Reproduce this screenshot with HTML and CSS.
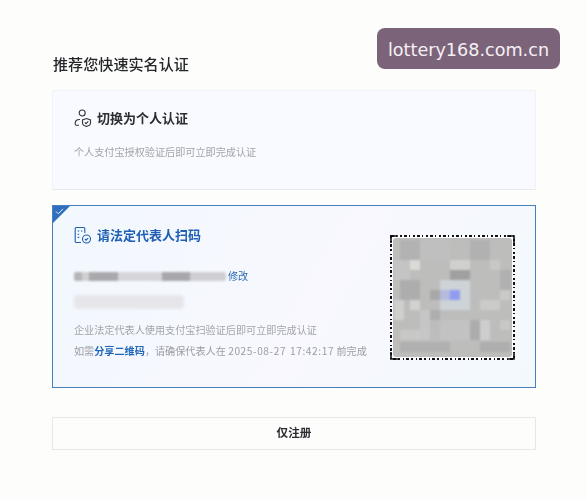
FILE: index.html
```html
<!DOCTYPE html>
<html lang="zh-CN">
<head>
<meta charset="utf-8">
<title>实名认证</title>
<link rel="stylesheet" href="styles.css">
</head>
<body>
<div class="watermark">lottery168.com.cn</div>
<main class="page">
  <h1 class="heading">推荐您快速实名认证</h1>

  <section class="card card-plain">
    <div class="title-row">
      <svg class="icon" viewBox="0 0 18 18" fill="none" stroke="#33363c" stroke-width="1.1">
        <circle cx="8.2" cy="4" r="3"/>
        <path d="M6 10.5H5.2C2.8 10.5 1.2 12 1.2 14.2V15c0 .8.5 1.2 1.2 1.2H5"/>
        <path d="M12.5 9.6l4 1.3v3c0 1.8-1.7 2.9-4 3.5-2.3-.6-4-1.7-4-3.5v-3z"/>
        <path d="M10.8 13.3l1.3 1.3 2.2-2.2"/>
      </svg>
      <h2 class="title">切换为个人认证</h2>
    </div>
    <p class="desc desc-top">个人支付宝授权验证后即可立即完成认证</p>
  </section>

  <section class="card card-active">
    <span class="corner"></span>
    <svg class="corner-check" viewBox="0 0 10 8" fill="none" stroke="#fff" stroke-width="1"><path d="M1 4l2.6 2.6L9 1"/></svg>
    <div class="active-info">
      <div class="title-row">
        <svg class="icon" viewBox="0 0 18 18" fill="none" stroke="#1f5fae" stroke-width="1.1">
          <path d="M7 16.5H2.2c-.6 0-1-.4-1-1V2.5c0-.6.4-1 1-1h7.6c.6 0 1 .4 1 1V7"/>
          <path d="M3.6 5h1.6M3.6 8.2h1.6M7 5h1.4M3.6 11.4h1.6"/>
          <circle cx="12.5" cy="13" r="4"/>
          <path d="M10.9 13l1.2 1.2 2-2"/>
        </svg>
        <h2 class="title title-blue">请法定代表人扫码</h2>
      </div>
      <div class="name-row">
        <div class="blur-name"></div>
        <a class="link edit">修改</a>
      </div>
      <div class="blur-id"></div>
      <p class="desc desc-company">企业法定代表人使用支付宝扫验证后即可立即完成认证</p>
      <p class="desc desc-share">如需<a class="link strong">分享二维码</a>，请确保代表人在 <span class="date">2025-08-27 17:42:17</span> 前完成</p>
    </div>
    <svg class="qr" viewBox="0 0 125 125">
      <rect x="1" y="1" width="123" height="123" fill="#fff"/>
      <rect x="1" y="1" width="123" height="123" fill="none" stroke="#111" stroke-width="2" stroke-dasharray="3 2 1 3 2 2"/>
      <path d="M1 8V1h7M117 1h7v7M1 117v7h7M124 117v7h-7" fill="none" stroke="#111" stroke-width="1.6"/>
      <rect x="3" y="3" width="119" height="119" rx="3" fill="#bdbdbc"/>
      <g class="qr-cells">
        <rect x="10" y="5" width="20" height="20" fill="#b2b2b2"/>
        <rect x="30" y="5" width="30" height="20" fill="#bfbfbf"/>
        <rect x="80" y="5" width="20" height="20" fill="#b1b1b1"/>
        <rect x="4" y="25" width="16" height="20" fill="#c4c4c4"/>
        <rect x="20" y="25" width="10" height="10" fill="#dadad7"/>
        <rect x="60" y="25" width="20" height="10" fill="#d0d0ce"/>
        <rect x="60" y="35" width="20" height="10" fill="#a0a0a0"/>
        <rect x="100" y="25" width="10" height="10" fill="#c8c8c6"/>
        <rect x="110" y="35" width="11" height="20" fill="#b0b0b0"/>
        <rect x="10" y="45" width="20" height="20" fill="#adadad"/>
        <rect x="50" y="45" width="30" height="30" fill="#cdd3d7"/>
        <rect x="40" y="55" width="10" height="10" fill="#a8a8a8"/>
        <rect x="50" y="55" width="10" height="10" fill="#b5bbde"/>
        <rect x="60" y="55" width="10" height="10" fill="#8f9cf0"/>
        <rect x="110" y="55" width="10" height="10" fill="#cacac8"/>
        <rect x="20" y="65" width="10" height="10" fill="#d2d2d0"/>
        <rect x="90" y="65" width="20" height="10" fill="#cbcbc9"/>
        <rect x="4" y="65" width="10" height="20" fill="#cfcfcd"/>
        <rect x="30" y="75" width="10" height="30" fill="#c6c6c6"/>
        <rect x="40" y="75" width="10" height="10" fill="#aeaeae"/>
        <rect x="80" y="85" width="10" height="20" fill="#acacac"/>
        <rect x="90" y="85" width="10" height="20" fill="#cecece"/>
        <rect x="110" y="85" width="10" height="10" fill="#c8c8c6"/>
        <rect x="10" y="95" width="20" height="10" fill="#c8c8c6"/>
        <rect x="50" y="85" width="30" height="20" fill="#c2c2c2"/>
        <rect x="10" y="107" width="50" height="10" fill="#b0b0b0"/>
        <rect x="90" y="107" width="30" height="10" fill="#aeaeae"/>
      </g>
    </svg>
  </section>

  <button class="register" type="button">仅注册</button>
</main>
</body>
</html>
```

FILE: styles.css
```css
* { box-sizing: border-box; }
html, body { margin: 0; height: 100%; }
body {
  background: #fdfefc;
  color: #222;
  font-family: "Noto Sans CJK SC", "Liberation Sans", sans-serif;
  position: relative;
  overflow: hidden;
}
.page {
  width: 484px;
  margin-left: 52px;
  padding-top: 53px;
  display: flex;
  flex-direction: column;
  filter: blur(.3px);
}
.heading {
  margin: 0 0 17px 1px;
  font-size: 15.1px;
  line-height: 20px;
  font-weight: 500;
  color: #25272b;
}
.card { width: 484px; position: relative; }
.card-plain {
  height: 100px;
  padding: 17px 21px 0;
  background: #f8faff;
  border: 1px solid #f2f3f6;
  border-bottom-color: #e9eaee;
  margin-bottom: 15px;
}
.card-active {
  height: 183px;
  padding: 19px 20px 0 21px;
  background: linear-gradient(120deg, #f1f8fe 0%, #f8f8fe 55%, #f2f9fd 100%);
  border: 1px solid #4580bd;
  display: flex;
  justify-content: space-between;
  margin-bottom: 29px;
}
.title-row { display: flex; align-items: center; gap: 5px; height: 20px; }
.icon { width: 18px; height: 18px; flex: none; }
.title { margin: 0; font-size: 13px; line-height: 20px; font-weight: 700; color: #2b2d31; }
.title-blue { color: #1f5fb4; }
.desc { margin: 0; font-size: 10.15px; line-height: 16px; color: #a3a5a9; }
.desc-top { margin-top: 16px; }
.desc-company { margin-top: 13px; }
.desc-share { margin-top: 5px; white-space: nowrap; color: #9b9da2; }
.date { letter-spacing: .6px; word-spacing: 1px; }
.link { color: #2d6db5; }
.strong { font-weight: 700; color: #1f66b8; }
.corner {
  position: absolute;
  left: 0;
  top: 0;
  border-style: solid;
  border-width: 17px 17px 0 0;
  border-color: #2f6fc0 transparent transparent transparent;
}
.corner-check { position: absolute; left: 2px; top: 2px; width: 9px; height: 7px; }
.active-info { width: 310px; }
.name-row { display: flex; align-items: center; gap: 2px; margin-top: 23px; height: 16px; }
.blur-name {
  width: 152px;
  height: 9px;
  border-radius: 2px;
  filter: blur(.8px);
  background: linear-gradient(90deg, #b5b5b8 0 5%, #d0d0d3 5% 10%, #a9a9ad 10% 29%, #d6d6da 29% 58%, #a8a8ac 58% 76%, #cfcfd3 76% 100%);
}
.edit { font-size: 10.15px; line-height: 16px; }
.blur-id {
  width: 110px;
  height: 14px;
  margin-top: 11px;
  border-radius: 4px;
  filter: blur(1.8px);
  background: #e6e6ea;
}
.qr { width: 125px; height: 125px; flex: none; margin: 10px 0 0; }
.qr-cells { filter: blur(1px); }
.register {
  width: 484px;
  height: 33px;
  padding: 0 0 2px;
  background: #fdfdfc;
  border: 1px solid #e6e7ea;
  font: 700 11.6px/1 "Noto Sans CJK SC", sans-serif;
  color: #2a2c30;
}
.watermark {
  position: absolute;
  left: 377px;
  top: 28px;
  width: 183px;
  height: 41px;
  border-radius: 8px;
  background: #7b6479;
  color: #f6f0f5;
  font: 17.6px/44px "DejaVu Sans", sans-serif;
  text-align: center;
  white-space: nowrap;
}
```
